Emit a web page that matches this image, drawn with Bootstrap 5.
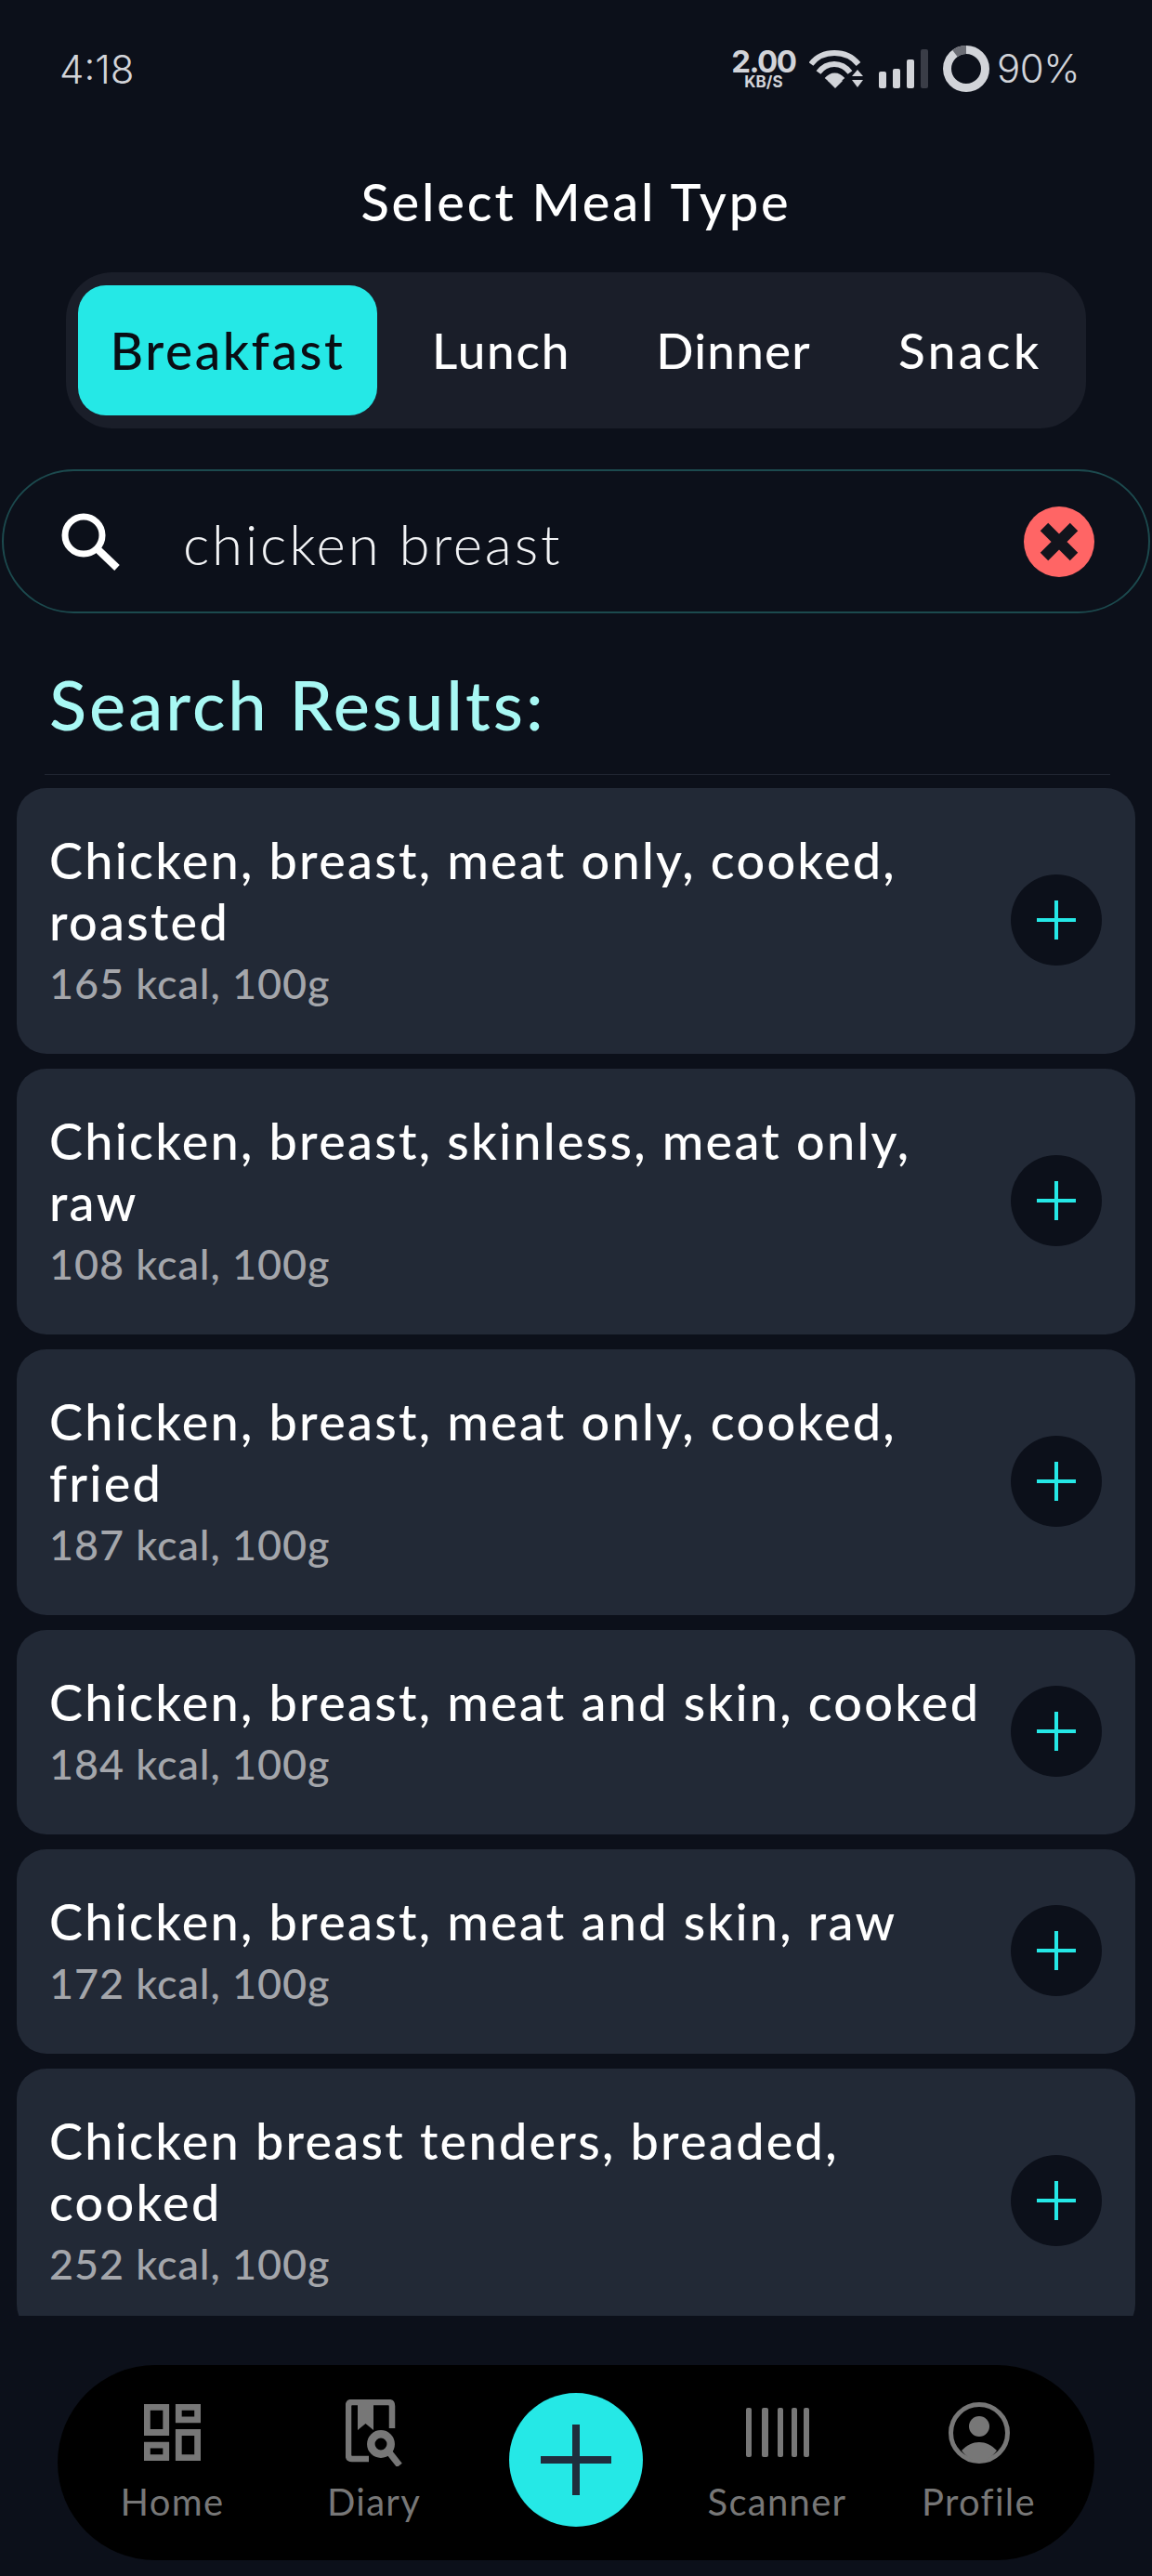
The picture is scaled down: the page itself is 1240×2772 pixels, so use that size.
<!DOCTYPE html>
<html lang="en"><head><meta charset="utf-8"><title>Select Meal Type</title>
<link href="https://cdn.jsdelivr.net/npm/bootstrap@5.3.0/dist/css/bootstrap.min.css" rel="stylesheet">
<style>
html,body{margin:0;background:#0c101a;}
.phone{width:1240px;height:2772px;overflow:hidden;background:#0c101a;font-family:"Lato","Liberation Sans",sans-serif;color:#fff;}
.statusbar{height:146px;padding:2px 78px 0 64px;color:#d2d4d9;font-family:"Inter","Liberation Sans",sans-serif;font-weight:300;}
.clock{font-size:42px;}
.pct{font-size:42px;line-height:1;letter-spacing:-.5px;}
.speed{width:70px;font-weight:700;text-align:center;margin-right:14px;}
.speed b{display:block;font-size:33px;line-height:27px;font-weight:700;letter-spacing:-1.5px;}
.speed i{display:block;font-size:17px;line-height:16px;font-style:normal;font-weight:700;}
.wifi{margin-right:17px;}
.screen-title{font-size:56px;line-height:68px;margin:37px 0 42px;font-weight:500;letter-spacing:2.85px;text-align:center;}
.segbar{width:1098px;height:168px;margin:0 auto 44px;padding:14px 13px;background:#1a1e29;border-radius:50px;display:flex;}
.segbtn{display:flex;align-items:center;justify-content:center;border:0;background:transparent;color:#fff;font-size:53px;font-weight:500;letter-spacing:1.8px;border-radius:30px;padding:0 47px;white-space:nowrap;}
.segbtn.on{flex:0 0 322px;padding:0;margin-right:12px;background:#25e8e6;color:#0a0d14;font-size:55px;letter-spacing:2.6px;}
.segbtn.seg-dinner{letter-spacing:1.2px;margin-left:-2px;}
.segbtn.seg-snack{letter-spacing:3.6px;}
.searchbox{height:155px;margin:0 2px;border:2px solid #1c4a4e;border-radius:78px;padding:0 58px 0 62px;}
.searchbox .q{margin-left:68px;padding-top:4px;font-size:60px;font-weight:300;letter-spacing:2.8px;color:#f2f3f5;}
.results-h{font-size:74px;line-height:90px;color:#a8f8f4;padding:53px 0 30px 53px;margin:0;font-weight:500;letter-spacing:3px;}
.rule{height:1px;background:#222733;margin:0 45px 14px 48px;}
.results{height:1644px;overflow:hidden;padding:0 18px;}
.fooditem{background:#222936;border-radius:32px;padding:45px 36px 43px 35px;margin-bottom:16px;border:0;color:#fff;}
.fooditem .nm{font-size:54px;line-height:66px;font-weight:500;letter-spacing:2.25px;}
.fooditem .kc{font-size:45px;line-height:66px;font-weight:500;color:#a4a6ab;letter-spacing:.9px;}
.addbtn{flex:0 0 98px;width:98px;height:98px;margin-bottom:4px;border-radius:50%;background:#0c101a;border:0;padding:0;}
.bottomnav{width:1116px;height:210px;margin:53px 0 0 62px;background:#000;border-radius:105px;padding:0 15px 2px;}
.navitem{width:217px;color:#777;font-size:40px;line-height:54px;letter-spacing:1.3px;text-align:center;}
.navitem .ico{height:76px;margin-bottom:9px;}
.fab{width:144px;height:144px;margin-bottom:4px;border-radius:50%;background:#25e8e6;border:0;padding:0;}
</style></head>
<body>
<div class="phone">
  <div class="statusbar d-flex align-items-center justify-content-between">
    <span class="clock">4:18</span>
    <div class="d-flex align-items-center">
      <div class="speed"><b>2.00</b><i>KB/S</i></div>
      <svg width="58" height="44" viewBox="0 0 58 44" fill="none" stroke="#d2d4d9" class="wifi"><path d="M2 17C14 1 40 1 53 17" stroke-width="6"/><path d="M10 26C19 14 35 14 44 26" stroke-width="6"/><path d="M19 34C24 28 31 28 36 34" stroke-width="6"/><path d="M20 35L28 29L36 35L28 43Z" fill="#d2d4d9" stroke="none"/><path d="M46 30L52 23L58 30ZM46 34L58 34L52 42Z" fill="#d2d4d9" stroke="none"/></svg>
      <svg width="53" height="42" viewBox="0 0 53 42" class="me-3"><rect x="0" y="24" width="8" height="18" rx="2" fill="#d2d4d9"/><rect x="15" y="21" width="8" height="21" rx="2" fill="#d2d4d9"/><rect x="30" y="11" width="8" height="31" rx="2" fill="#d2d4d9"/><rect x="45" y="0" width="8" height="42" rx="2" fill="#3a3d47"/></svg>
      <svg width="50" height="50" viewBox="0 0 50 50" class="me-2"><circle cx="25" cy="25" r="20.5" fill="none" stroke="#d2d4d9" stroke-width="9"/><path d="M25 4.5A20.5 20.5 0 0 0 12.9 8.5" fill="none" stroke="#6b6d75" stroke-width="9"/></svg>
      <span class="pct">90%</span>
    </div>
  </div>
  <h1 class="screen-title">Select Meal Type</h1>
  <div class="segbar">
    <button class="segbtn on">Breakfast</button>
    <button class="segbtn">Lunch</button>
    <button class="segbtn seg-dinner">Dinner</button>
    <button class="segbtn seg-snack">Snack</button>
  </div>
  <div class="searchbox d-flex align-items-center">
    <svg width="63" height="62" viewBox="0 0 63 62" fill="none" stroke="#fff" stroke-width="7"><circle cx="24" cy="24" r="20"/><path d="M38 38L60 59" stroke-width="8"/></svg>
    <span class="q flex-grow-1">chicken breast</span>
    <svg width="76" height="76" viewBox="0 0 76 76"><circle cx="38" cy="38" r="38" fill="#ff6565"/><path d="M22 22L54 54M54 22L22 54" stroke="#12141c" stroke-width="12" fill="none"/></svg>
  </div>
  <h2 class="results-h">Search Results:</h2>
  <div class="rule"></div>
  <div class="results">
    <div class="fooditem d-flex align-items-center justify-content-between"><div><div class="nm">Chicken, breast, meat only, cooked,<br>roasted</div><div class="kc">165 kcal, 100g</div></div><button class="addbtn d-flex align-items-center justify-content-center"><svg width="42" height="42" viewBox="0 0 42 42"><path d="M21 0V42M0 21H42" stroke="#25e8e6" stroke-width="4"/></svg></button></div>
    <div class="fooditem d-flex align-items-center justify-content-between"><div><div class="nm">Chicken, breast, skinless, meat only,<br>raw</div><div class="kc">108 kcal, 100g</div></div><button class="addbtn d-flex align-items-center justify-content-center"><svg width="42" height="42" viewBox="0 0 42 42"><path d="M21 0V42M0 21H42" stroke="#25e8e6" stroke-width="4"/></svg></button></div>
    <div class="fooditem d-flex align-items-center justify-content-between"><div><div class="nm">Chicken, breast, meat only, cooked,<br>fried</div><div class="kc">187 kcal, 100g</div></div><button class="addbtn d-flex align-items-center justify-content-center"><svg width="42" height="42" viewBox="0 0 42 42"><path d="M21 0V42M0 21H42" stroke="#25e8e6" stroke-width="4"/></svg></button></div>
    <div class="fooditem d-flex align-items-center justify-content-between"><div><div class="nm">Chicken, breast, meat and skin, cooked</div><div class="kc">184 kcal, 100g</div></div><button class="addbtn d-flex align-items-center justify-content-center"><svg width="42" height="42" viewBox="0 0 42 42"><path d="M21 0V42M0 21H42" stroke="#25e8e6" stroke-width="4"/></svg></button></div>
    <div class="fooditem d-flex align-items-center justify-content-between"><div><div class="nm">Chicken, breast, meat and skin, raw</div><div class="kc">172 kcal, 100g</div></div><button class="addbtn d-flex align-items-center justify-content-center"><svg width="42" height="42" viewBox="0 0 42 42"><path d="M21 0V42M0 21H42" stroke="#25e8e6" stroke-width="4"/></svg></button></div>
    <div class="fooditem d-flex align-items-center justify-content-between"><div><div class="nm">Chicken breast tenders, breaded,<br>cooked</div><div class="kc">252 kcal, 100g</div></div><button class="addbtn d-flex align-items-center justify-content-center"><svg width="42" height="42" viewBox="0 0 42 42"><path d="M21 0V42M0 21H42" stroke="#25e8e6" stroke-width="4"/></svg></button></div>
  </div>
  <nav class="bottomnav d-flex align-items-center">
    <div class="navitem"><div class="ico d-flex align-items-center justify-content-center"><svg width="61" height="61" viewBox="3 3 18 18" fill="#777"><path d="M19 5v2h-4V5h4M9 5v6H5V5h4m10 8v6h-4v-6h4M9 17v2H5v-2h4M21 3h-8v6h8V3zM11 3H3v10h8V3zm10 8h-8v10h8V11zm-10 4H3v6h8v-6z"/></svg></div>Home</div>
    <div class="navitem"><div class="ico d-flex align-items-center justify-content-center"><svg width="62" height="72" viewBox="0 0 62 72" fill="none" stroke="#777" stroke-width="6.5"><path d="M50 31V7Q50 3 46 3H7Q3 3 3 7V60Q3 64 7 64H25"/><path d="M13 0H30V33L21.5 26L13 33Z" fill="#777" stroke="none"/><circle cx="38" cy="48" r="10.7" stroke-width="8.5"/><path d="M47 57L58 71" stroke-width="7"/></svg></div>Diary</div>
    <div class="navitem d-flex justify-content-center"><button class="fab d-flex align-items-center justify-content-center"><svg width="76" height="76" viewBox="0 0 76 76"><path d="M38 0V76M0 38H76" stroke="#1f2d3d" stroke-width="8"/></svg></button></div>
    <div class="navitem"><div class="ico d-flex align-items-center justify-content-center"><svg width="68" height="53" viewBox="0 0 68 53" fill="#777"><rect x="0" width="6" height="53" rx="2"/><rect x="17" width="7" height="53" rx="2"/><rect x="34" width="6" height="53" rx="2"/><rect x="49" width="6" height="53" rx="2"/><rect x="62" width="6" height="53" rx="2"/></svg></div>Scanner</div>
    <div class="navitem"><div class="ico d-flex align-items-center justify-content-center"><svg width="66" height="66" viewBox="0 0 66 66"><circle cx="33" cy="33" r="30.5" fill="none" stroke="#777" stroke-width="5"/><circle cx="33" cy="26" r="11" fill="#777"/><path d="M14 52C20 46 26 43 33 43C40 43 46 46 52 52C46 60 40 63 33 63C26 63 20 60 14 52Z" fill="#777"/></svg></div>Profile</div>
  </nav>
</div>
<script src="https://cdn.jsdelivr.net/npm/bootstrap@5.3.0/dist/js/bootstrap.bundle.min.js"></script>
</body></html>
